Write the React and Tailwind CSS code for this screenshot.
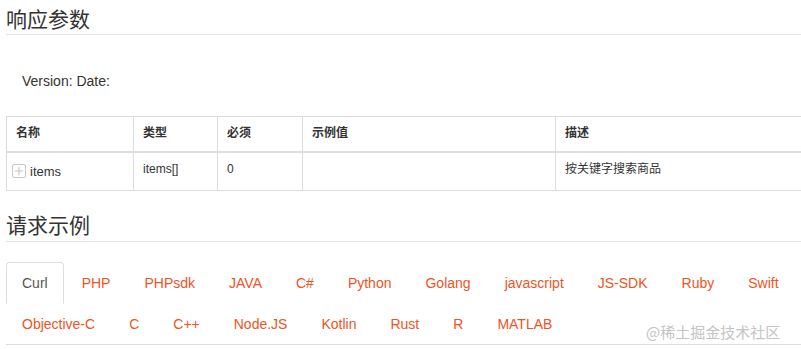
const tabsRow1 = ["Curl", "PHP", "PHPsdk", "JAVA", "C#", "Python", "Golang", "javascript", "JS-SDK", "Ruby", "Swift"];
const tabsRow2 = ["Objective-C", "C", "C++", "Node.JS", "Kotlin", "Rust", "R", "MATLAB"];

function PlusBox() {
  return (
    <span className="inline-flex items-center justify-center w-[14px] h-[14px] border border-[#c8c8c8] rounded-[2px] mr-[4px] align-middle">
      <svg width="10" height="10" viewBox="0 0 10 10">
        <path d="M5 1v8M1 5h8" stroke="#c0c0c0" strokeWidth="1" />
      </svg>
    </span>
  );
}

export default function App() {
  return (
    <div className="w-[801px] h-[349px] overflow-hidden bg-white text-[#333] relative" style={{ fontFamily: '"Liberation Sans", "Noto Sans CJK SC", sans-serif' }}>
      <div className="w-[1000px] pl-[6px]">
        <h3 className="text-[21px] leading-[24px] pt-[8px] pb-[2px] border-b border-[#e5e5e5]">响应参数</h3>

        <p className="text-[14px] leading-[20px] pl-[16px] mt-[36px] mb-[25px]">Version: Date:</p>

        <table className="border-collapse text-[12px] leading-[17px] w-[900px]">
          <thead>
            <tr className="h-[35px]">
              <th className="w-[127px] border border-[#ddd] border-b-2 text-left font-bold px-[9px] align-middle">名称</th>
              <th className="w-[84px] border border-[#ddd] border-b-2 text-left font-bold px-[9px] align-middle">类型</th>
              <th className="w-[85px] border border-[#ddd] border-b-2 text-left font-bold px-[9px] align-middle">必须</th>
              <th className="w-[253px] border border-[#ddd] border-b-2 text-left font-bold px-[9px] align-middle">示例值</th>
              <th className="border border-[#ddd] border-b-2 text-left font-bold px-[9px] align-middle">描述</th>
            </tr>
          </thead>
          <tbody>
            <tr className="h-[39px]">
              <td className="border border-[#ddd] px-[5px] pt-[9px] align-top text-[13px]">
                <PlusBox />
                <span className="align-middle">items</span>
              </td>
              <td className="border border-[#ddd] px-[9px] pt-[8px] align-top">items[]</td>
              <td className="border border-[#ddd] px-[9px] pt-[8px] align-top">0</td>
              <td className="border border-[#ddd] px-[9px] pt-[8px] align-top"></td>
              <td className="border border-[#ddd] px-[9px] pt-[8px] align-top">按关键字搜索商品</td>
            </tr>
          </tbody>
        </table>

        <h3 className="text-[21px] leading-[24px] mt-[23px] pb-[3px] border-b border-[#e5e5e5]">请求示例</h3>

        <ul className="w-[795px] mt-[20px] flex flex-wrap border-b border-[#ddd] text-[14px] leading-[20px]">
          {[...tabsRow1, ...tabsRow2].map((t, i) => (
            <li key={t} className="-mb-px">
              <a
                className={
                  i === 0
                    ? "block px-[15px] py-[10px] mr-[2px] border border-[#ddd] border-b-transparent rounded-t-[4px] text-[#555] bg-white"
                    : "block px-[15px] py-[10px] mr-[2px] border border-transparent text-[#f05323]"
                }
              >
                {t}
              </a>
            </li>
          ))}
        </ul>
      </div>

      <div className="absolute left-[646px] top-[322px] text-[15px] leading-[20px] text-[#c4c4c4]" style={{ fontFamily: '"Noto Sans CJK SC", sans-serif' }}>
        @稀土掘金技术社区
      </div>
    </div>
  );
}
